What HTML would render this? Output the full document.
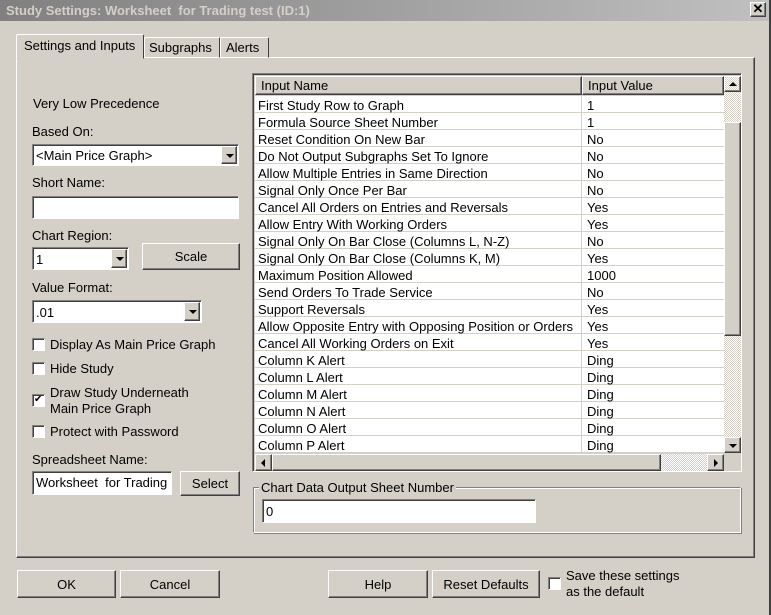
<!DOCTYPE html>
<html><head><meta charset="utf-8"><style>
*{box-sizing:border-box;margin:0;padding:0}
body{width:771px;height:615px;background:#d4d0c8;font:13px "Liberation Sans",Arial,sans-serif;color:#000;position:relative;overflow:hidden}
.a{position:absolute}
.title{left:0;top:0;width:771px;height:21px;background:linear-gradient(90deg,#808080,#c0c0c0);color:#d4d0c8;font-weight:bold;font-size:13px;padding:3px 0 0 6px;white-space:nowrap}
.out{border:1px solid;border-color:#fff #404040 #404040 #fff;box-shadow:inset -1px -1px #808080}
.in{border:1px solid;border-color:#808080 #fff #fff #808080;box-shadow:inset 1px 1px #404040;background:#fff}
.btn{text-align:center;background:#d4d0c8}
.chk{width:13px;height:13px}
.dd{position:absolute;right:1px;top:1px;bottom:1px;width:16px;background:#d4d0c8}
.tri{position:absolute;left:4px;top:7px;width:0;height:0;border-left:4px solid transparent;border-right:4px solid transparent;border-top:4px solid #000}
.row{position:absolute;left:255px;width:469px;height:17px;background:#fff;border-bottom:1px solid #d4d0c8}
.row span{position:absolute;top:2px;white-space:nowrap}
.row .v{left:332px}
.row .n{left:3px}
.row i{position:absolute;left:326px;top:0;bottom:-1px;width:1px;background:#d4d0c8}
.pat{background-color:#d4d0c8;background-image:repeating-conic-gradient(#fff 0 25%,#d4d0c8 0 50%);background-size:2px 2px}
</style></head><body>
<div class="a title">Study Settings: Worksheet&nbsp; for Trading test (ID:1)</div>
<div class="a out btn" style="left:750px;top:2px;width:16px;height:15px;font-size:13px;line-height:12px;font-weight:bold">✕</div>
<div class="a" style="left:0;top:21px;width:771px;height:1px;background:#d4d0c8"></div>
<div class="a" style="left:769px;top:0;width:2px;height:615px;background:#404040"></div>

<div class="a out" style="left:16px;top:57px;width:739px;height:501px"></div>
<div class="a" style="left:144px;top:37px;width:76px;height:21px;border:1px solid;border-color:#fff #404040 transparent #fff;border-radius:2px 2px 0 0;padding:2px 0 0 4px">Subgraphs</div>
<div class="a" style="left:220px;top:37px;width:49px;height:21px;border:1px solid;border-color:#fff #404040 transparent #fff;border-radius:2px 2px 0 0;padding:2px 0 0 5px">Alerts</div>
<div class="a" style="left:16px;top:34px;width:128px;height:25px;background:#d4d0c8;border:1px solid;border-color:#fff #404040 transparent #fff;border-radius:2px 2px 0 0;padding:3px 0 0 7px">Settings and Inputs</div>

<div class="a" style="left:33px;top:96px">Very Low Precedence</div>
<div class="a" style="left:32px;top:124px">Based On:</div>
<div class="a in" style="left:32px;top:144px;width:207px;height:22px;padding:3px 0 0 3px">&lt;Main Price Graph&gt;<div class="dd out"><div class="tri"></div></div></div>
<div class="a" style="left:32px;top:175px">Short Name:</div>
<div class="a in" style="left:32px;top:196px;width:207px;height:23px"></div>
<div class="a" style="left:32px;top:228px">Chart Region:</div>
<div class="a in" style="left:32px;top:247px;width:97px;height:23px;padding:4px 0 0 3px">1<div class="dd out"><div class="tri"></div></div></div>
<div class="a out btn" style="left:142px;top:243px;width:98px;height:27px;padding-top:5px">Scale</div>
<div class="a" style="left:32px;top:280px">Value Format:</div>
<div class="a in" style="left:32px;top:300px;width:170px;height:23px;padding:4px 0 0 3px">.01<div class="dd out"><div class="tri"></div></div></div>
<div class="a in chk" style="left:32px;top:338px"></div><div class="a" style="left:50px;top:337px">Display As Main Price Graph</div>
<div class="a in chk" style="left:32px;top:362px"></div><div class="a" style="left:50px;top:361px">Hide Study</div>
<div class="a in chk" style="left:32px;top:394px;font-size:10px;line-height:10px;padding-left:1px">✔</div><div class="a" style="left:50px;top:385px;line-height:16px">Draw Study Underneath<br>Main Price Graph</div>
<div class="a in chk" style="left:32px;top:425px"></div><div class="a" style="left:50px;top:424px">Protect with Password</div>
<div class="a" style="left:32px;top:452px">Spreadsheet Name:</div>
<div class="a in" style="left:32px;top:471px;width:140px;height:24px;padding:3px 0 0 3px;white-space:nowrap;overflow:hidden">Worksheet&nbsp; for Trading test</div>
<div class="a out btn" style="left:180px;top:471px;width:60px;height:25px;padding-top:4px">Select</div>

<div class="a in" style="left:252px;top:73px;width:490px;height:399px;background:#d4d0c8"></div>
<div class="a out" style="left:255px;top:76px;width:327px;height:19px;padding:1px 0 0 5px">Input Name</div>
<div class="a out" style="left:582px;top:76px;width:142px;height:19px;padding:1px 0 0 5px">Input Value</div>
<div class="a" style="left:255px;top:95px;width:469px;height:1px;background:#d4d0c8"></div>
<div class="a pat" style="left:724px;top:76px;width:17px;height:377px"></div>
<div class="a out" style="left:724px;top:76px;width:17px;height:16px"><div class="tri" style="left:4px;top:5px;border-top:0;border-bottom:4px solid #000"></div></div>
<div class="a out" style="left:724px;top:122px;width:17px;height:214px;background:#d4d0c8"></div>
<div class="a out" style="left:724px;top:437px;width:17px;height:16px;background:#d4d0c8"><div class="tri" style="left:4px;top:6px"></div></div>
<div class="a pat" style="left:255px;top:454px;width:469px;height:17px"></div>
<div class="a out" style="left:255px;top:454px;width:17px;height:17px;background:#d4d0c8"><div class="a" style="left:5px;top:4px;border-top:4px solid transparent;border-bottom:4px solid transparent;border-right:4px solid #000"></div></div>
<div class="a out" style="left:272px;top:454px;width:389px;height:17px;background:#d4d0c8"></div>
<div class="a out" style="left:707px;top:454px;width:17px;height:17px;background:#d4d0c8"><div class="a" style="left:6px;top:4px;border-top:4px solid transparent;border-bottom:4px solid transparent;border-left:4px solid #000"></div></div>

<div class="row" style="top:96px"><span class="n">First Study Row to Graph</span><i></i><span class="v">1</span></div>
<div class="row" style="top:113px"><span class="n">Formula Source Sheet Number</span><i></i><span class="v">1</span></div>
<div class="row" style="top:130px"><span class="n">Reset Condition On New Bar</span><i></i><span class="v">No</span></div>
<div class="row" style="top:147px"><span class="n">Do Not Output Subgraphs Set To Ignore</span><i></i><span class="v">No</span></div>
<div class="row" style="top:164px"><span class="n">Allow Multiple Entries in Same Direction</span><i></i><span class="v">No</span></div>
<div class="row" style="top:181px"><span class="n">Signal Only Once Per Bar</span><i></i><span class="v">No</span></div>
<div class="row" style="top:198px"><span class="n">Cancel All Orders on Entries and Reversals</span><i></i><span class="v">Yes</span></div>
<div class="row" style="top:215px"><span class="n">Allow Entry With Working Orders</span><i></i><span class="v">Yes</span></div>
<div class="row" style="top:232px"><span class="n">Signal Only On Bar Close (Columns L, N-Z)</span><i></i><span class="v">No</span></div>
<div class="row" style="top:249px"><span class="n">Signal Only On Bar Close (Columns K, M)</span><i></i><span class="v">Yes</span></div>
<div class="row" style="top:266px"><span class="n">Maximum Position Allowed</span><i></i><span class="v">1000</span></div>
<div class="row" style="top:283px"><span class="n">Send Orders To Trade Service</span><i></i><span class="v">No</span></div>
<div class="row" style="top:300px"><span class="n">Support Reversals</span><i></i><span class="v">Yes</span></div>
<div class="row" style="top:317px"><span class="n">Allow Opposite Entry with Opposing Position or Orders</span><i></i><span class="v">Yes</span></div>
<div class="row" style="top:334px"><span class="n">Cancel All Working Orders on Exit</span><i></i><span class="v">Yes</span></div>
<div class="row" style="top:351px"><span class="n">Column K Alert</span><i></i><span class="v">Ding</span></div>
<div class="row" style="top:368px"><span class="n">Column L Alert</span><i></i><span class="v">Ding</span></div>
<div class="row" style="top:385px"><span class="n">Column M Alert</span><i></i><span class="v">Ding</span></div>
<div class="row" style="top:402px"><span class="n">Column N Alert</span><i></i><span class="v">Ding</span></div>
<div class="row" style="top:419px"><span class="n">Column O Alert</span><i></i><span class="v">Ding</span></div>
<div class="row" style="top:436px"><span class="n">Column P Alert</span><i></i><span class="v">Ding</span></div>

<div class="a" style="left:253px;top:487px;width:488px;height:46px;border:1px solid;border-color:#808080 #fff #fff #808080;box-shadow:inset 1px 1px #fff,1px 1px #808080"></div>
<div class="a" style="left:259px;top:480px;background:#d4d0c8;padding:0 2px">Chart Data Output Sheet Number</div>
<div class="a in" style="left:262px;top:499px;width:274px;height:24px;padding:4px 0 0 3px">0</div>

<div class="a out btn" style="left:17px;top:570px;width:99px;height:28px;padding-top:6px">OK</div>
<div class="a out btn" style="left:120px;top:570px;width:100px;height:28px;padding-top:6px">Cancel</div>
<div class="a out btn" style="left:328px;top:570px;width:100px;height:28px;padding-top:6px">Help</div>
<div class="a out btn" style="left:432px;top:570px;width:108px;height:28px;padding-top:6px">Reset Defaults</div>
<div class="a in chk" style="left:548px;top:577px"></div>
<div class="a" style="left:566px;top:568px;line-height:16px">Save these settings<br>as the default</div>
</body></html>
